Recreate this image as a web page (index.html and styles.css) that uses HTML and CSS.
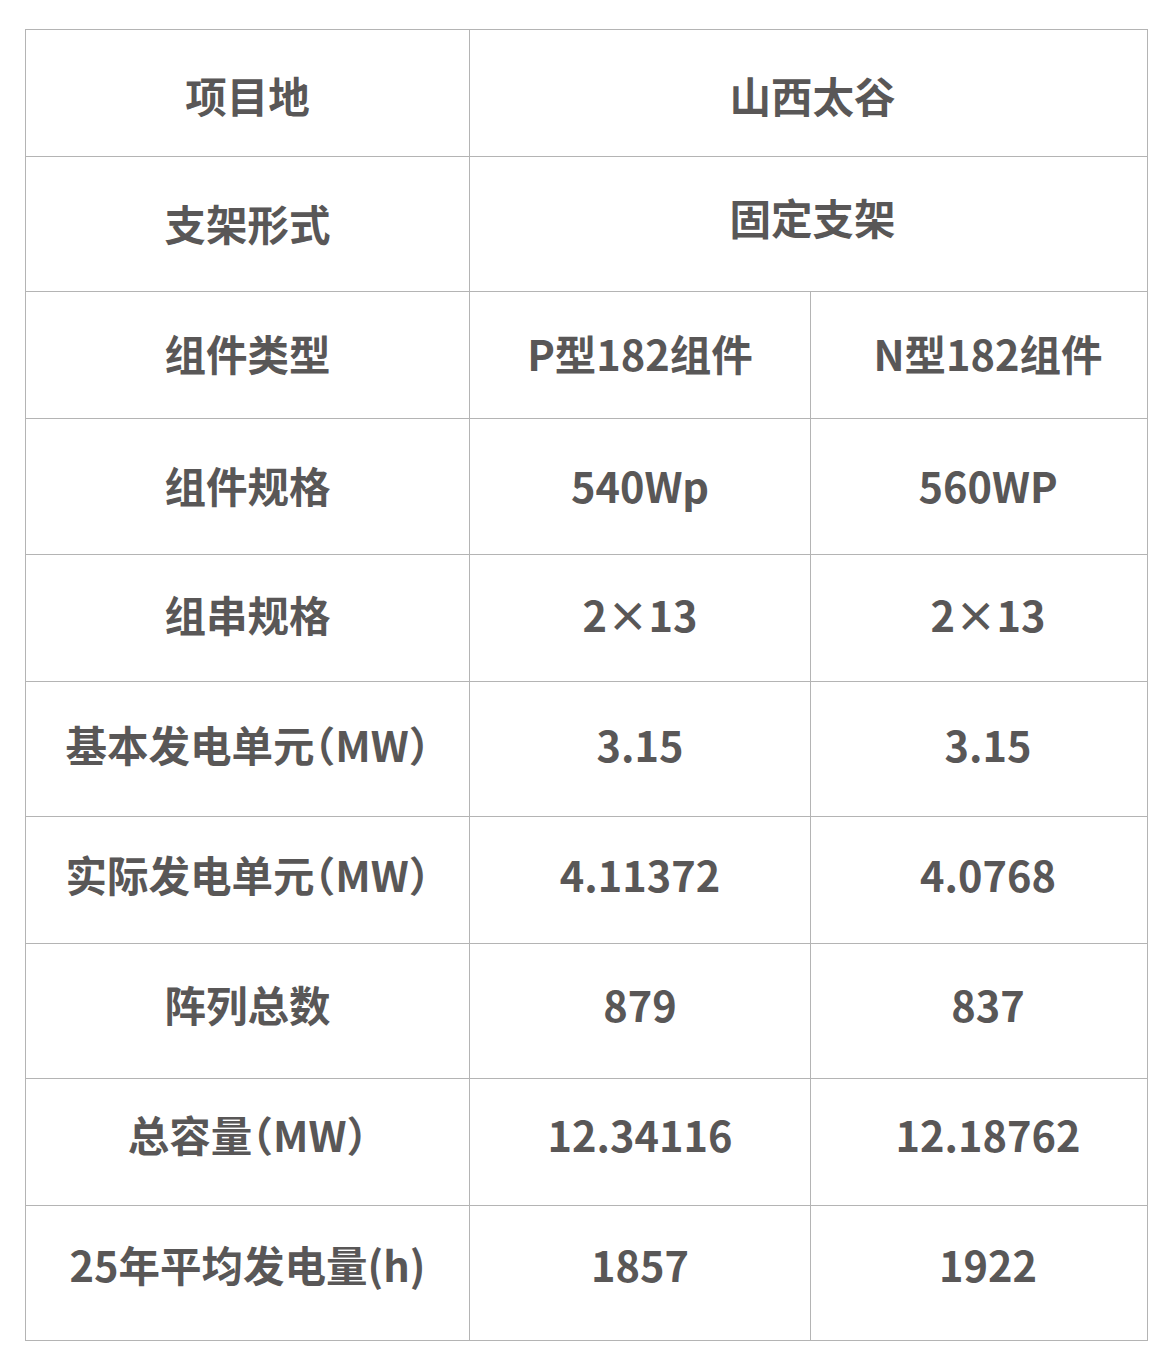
FILE: index.html
```html
<!DOCTYPE html>
<html lang="zh-CN">
<head>
<meta charset="utf-8">
<title>对比表</title>
<link rel="stylesheet" href="styles.css">
</head>
<body>
<table class="spec">
  <colgroup>
    <col class="c1"><col class="c2"><col class="c3">
  </colgroup>
  <tr class="short r1"><td>项目地</td><td class="wide" colspan="2">山西太谷</td></tr>
  <tr class="tall r2"><td>支架形式</td><td class="wide up" colspan="2">固定支架</td></tr>
  <tr class="short r3"><td>组件类型</td><td>P型182组件</td><td class="third">N型182组件</td></tr>
  <tr class="taller r4"><td>组件规格</td><td>540Wp</td><td class="third">560WP</td></tr>
  <tr class="short r5"><td>组串规格</td><td>2×13</td><td class="third">2×13</td></tr>
  <tr class="tall r6"><td>基本发电单元<span class="p">（</span>MW<span class="p">）</span></td><td>3.15</td><td class="third">3.15</td></tr>
  <tr class="short r7"><td>实际发电单元<span class="p">（</span>MW<span class="p">）</span></td><td>4.11372</td><td class="third">4.0768</td></tr>
  <tr class="tall r8"><td>阵列总数</td><td>879</td><td class="third">837</td></tr>
  <tr class="short r9"><td>总容量<span class="p">（</span>MW<span class="p">）</span></td><td>12.34116</td><td class="third">12.18762</td></tr>
  <tr class="tall r10"><td>25年平均发电量(h)</td><td>1857</td><td class="third">1922</td></tr>
</table>
</body>
</html>
```
FILE: styles.css
```css
html, body {
  margin: 0;
  background: #ffffff;
}
body {
  padding: 29px 0 0 25px;
  font-family: "Noto Sans CJK SC", "Noto Sans", sans-serif;
  color: #595757;
}
.spec {
  border-collapse: collapse;
  table-layout: fixed;
  width: 1122px;
}
.c1 { width: 444px; }
.c2 { width: 341px; }
.c3 { width: 337px; }
.spec td {
  border: 1px solid #b4b4b4;
  text-align: center;
  vertical-align: middle;
  font-size: 41.5px;
  font-weight: 700;
  padding: 0;
  white-space: nowrap;
  line-height: 50px;
}
.p { font-feature-settings: "halt" 1; }
.short { height: 127px; }
.tall { height: 135px; }
.taller { height: 136px; }

.spec td.third { padding-left: 18px; }
.spec td.wide { padding-left: 8px; }

.r1 td { padding-top: 3px; }
.r2 td { padding-bottom: 2px; }
.r2 td.up { padding-bottom: 14px; }
.r3 td { padding-bottom: 5px; }
.r4 td { padding-bottom: 4px; }
.r5 td { padding-bottom: 9px; }
.r6 td { padding-bottom: 11px; }
.r7 td { padding-bottom: 13px; }
.r8 td { padding-bottom: 15px; }
.r9 td { padding-bottom: 17px; }
.r10 td { padding-bottom: 19px; }
```
